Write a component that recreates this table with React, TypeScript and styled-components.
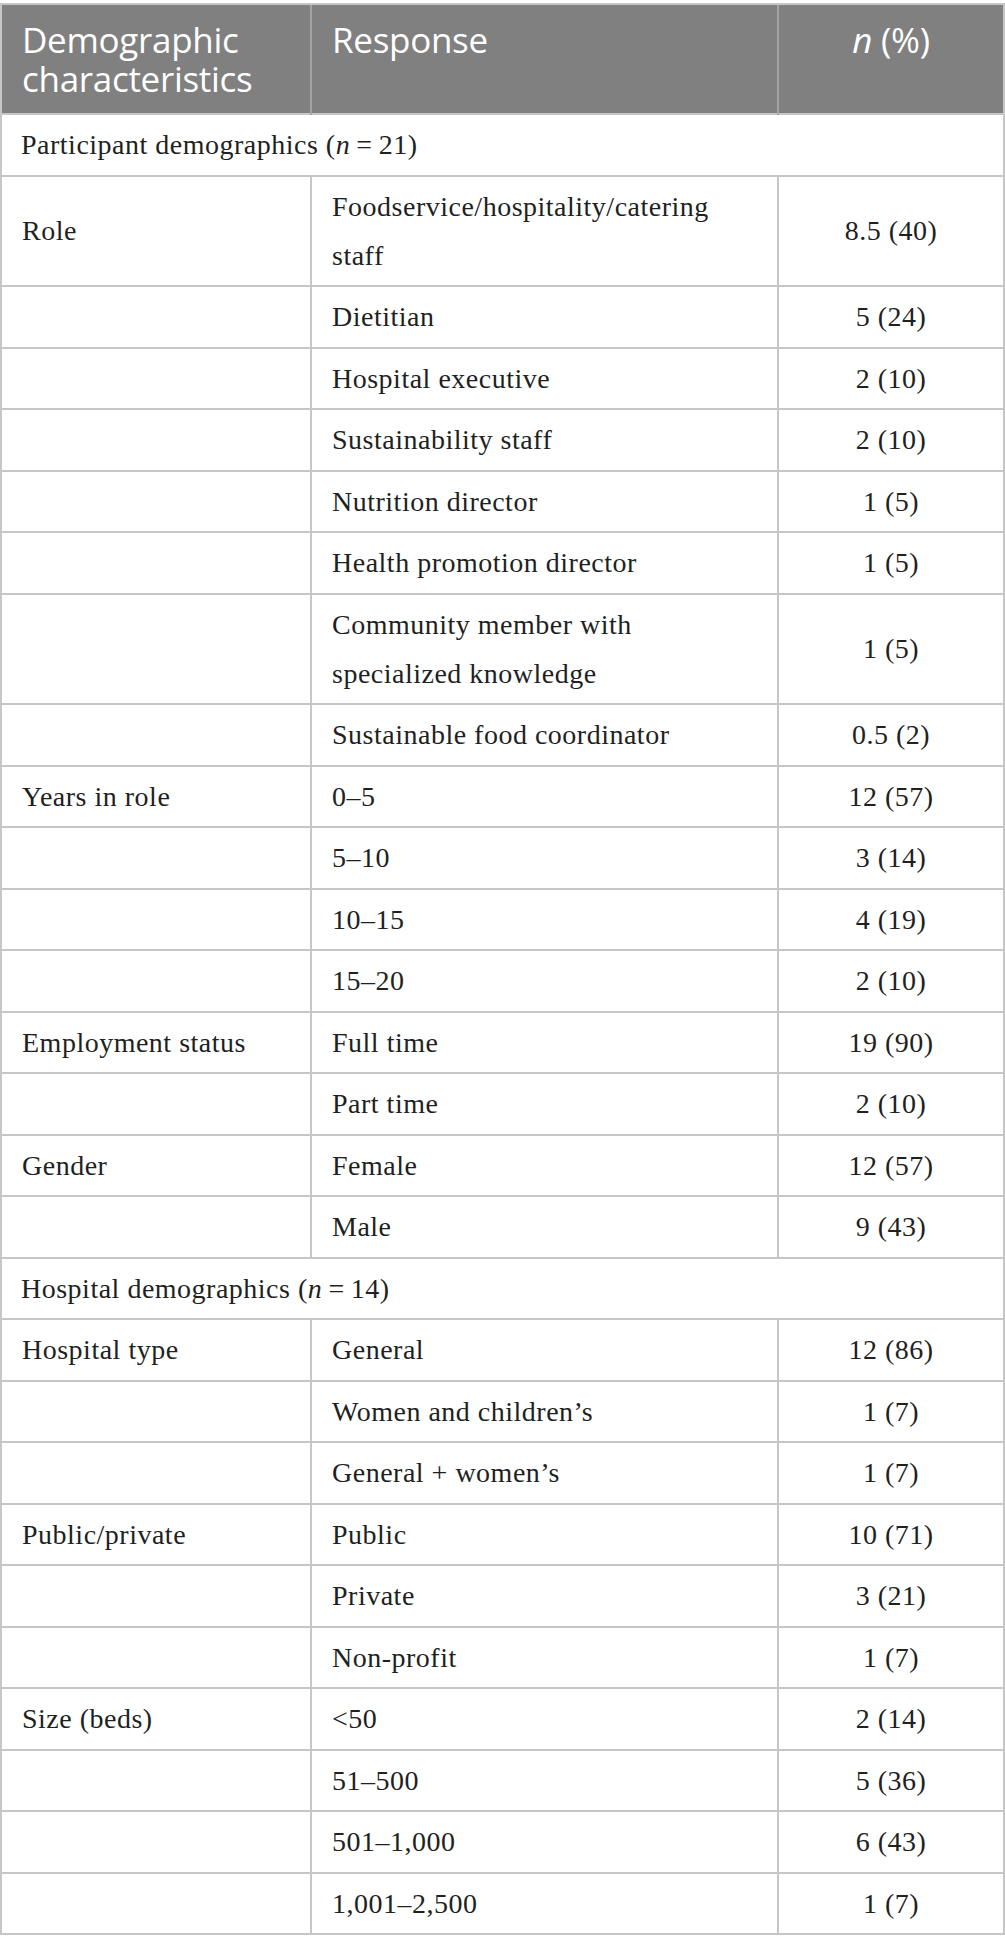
import React from 'react';
import styled, { createGlobalStyle } from 'styled-components';

const GlobalStyle = createGlobalStyle`
  html, body {
    margin: 0;
    padding: 0;
    background: #ffffff;
  }
`;

type Row = [string, string, string];

interface Section {
  title: string;
  n: number;
  rows: Row[];
}

const sections: Section[] = [
  {
    title: 'Participant demographics',
    n: 21,
    rows: [
      ['Role', 'Foodservice/hospitality/catering staff', '8.5 (40)'],
      ['', 'Dietitian', '5 (24)'],
      ['', 'Hospital executive', '2 (10)'],
      ['', 'Sustainability staff', '2 (10)'],
      ['', 'Nutrition director', '1 (5)'],
      ['', 'Health promotion director', '1 (5)'],
      ['', 'Community member with specialized knowledge', '1 (5)'],
      ['', 'Sustainable food coordinator', '0.5 (2)'],
      ['Years in role', '0–5', '12 (57)'],
      ['', '5–10', '3 (14)'],
      ['', '10–15', '4 (19)'],
      ['', '15–20', '2 (10)'],
      ['Employment status', 'Full time', '19 (90)'],
      ['', 'Part time', '2 (10)'],
      ['Gender', 'Female', '12 (57)'],
      ['', 'Male', '9 (43)'],
    ],
  },
  {
    title: 'Hospital demographics',
    n: 14,
    rows: [
      ['Hospital type', 'General', '12 (86)'],
      ['', 'Women and children’s', '1 (7)'],
      ['', 'General + women’s', '1 (7)'],
      ['Public/private', 'Public', '10 (71)'],
      ['', 'Private', '3 (21)'],
      ['', 'Non-profit', '1 (7)'],
      ['Size (beds)', '<50', '2 (14)'],
      ['', '51–500', '5 (36)'],
      ['', '501–1,000', '6 (43)'],
      ['', '1,001–2,500', '1 (7)'],
    ],
  },
];

const Table = styled.table`
  width: 1005px;
  margin-top: 3px;
  border-collapse: collapse;
  table-layout: fixed;
  border: 2px solid #c6c6c6;
  font-family: 'Liberation Serif', 'Times New Roman', serif;
  color: #221f1f;
`;

const HeadCell = styled.th<{ $center?: boolean }>`
  background: #808080;
  color: #ffffff;
  font-family: 'Open Sans', 'Noto Sans', sans-serif;
  font-weight: 400;
  font-size: 35px;
  line-height: 39px;
  letter-spacing: -0.3px;
  text-align: ${p => (p.$center ? 'center' : 'left')};
  vertical-align: top;
  padding: 15px 20px 15px 20px;
  border-left: 2px solid #a4a4a4;
  border-top: 2px solid #c6c6c6;

  &:first-child {
    border-left: 2px solid #c6c6c6;
  }
`;

const Cell = styled.td<{ $center?: boolean }>`
  font-size: 28px;
  line-height: 49px;
  letter-spacing: 0.5px;
  text-align: ${p => (p.$center ? 'center' : 'left')};
  vertical-align: middle;
  padding: 5.25px 20px;
  border: 2px solid #c6c6c6;
`;

const SectionCell = styled(Cell)`
  padding-left: 19px;
`;

export default function App() {
  return (
    <>
      <GlobalStyle />
      <Table>
        <colgroup>
          <col style={{ width: 310 }} />
          <col style={{ width: 467 }} />
          <col />
        </colgroup>
        <thead>
          <tr>
            <HeadCell>Demographic characteristics</HeadCell>
            <HeadCell>Response</HeadCell>
            <HeadCell $center>
              <i>n</i> (%)
            </HeadCell>
          </tr>
        </thead>
        <tbody>
          {sections.map(section => (
            <React.Fragment key={section.title}>
              <tr>
                <SectionCell colSpan={3}>
                  {section.title} (<i>n</i>{'\u2009=\u2009'}{section.n})
                </SectionCell>
              </tr>
              {section.rows.map(([label, response, value], index) => (
                <tr key={index}>
                  <Cell>{label}</Cell>
                  <Cell>{response}</Cell>
                  <Cell $center>{value}</Cell>
                </tr>
              ))}
            </React.Fragment>
          ))}
        </tbody>
      </Table>
    </>
  );
}
